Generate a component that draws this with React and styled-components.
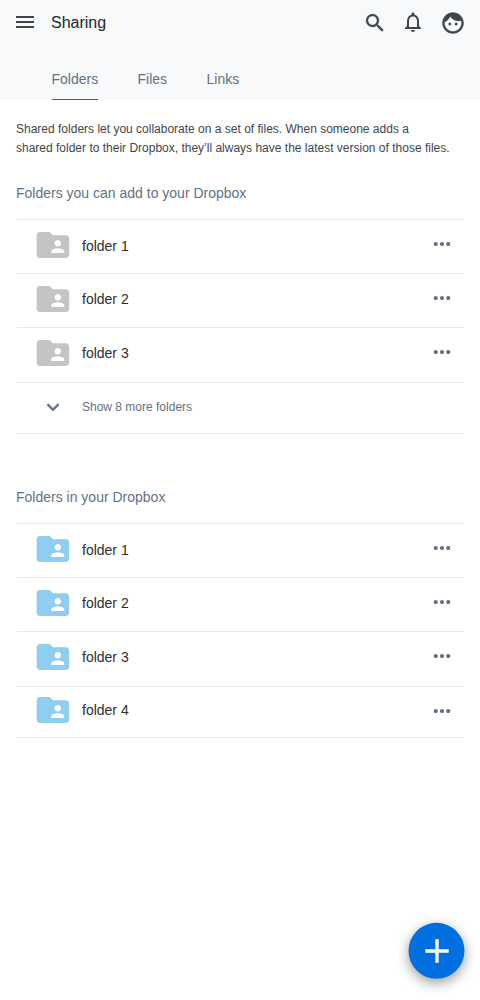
import React from 'react';
import styled, { createGlobalStyle } from 'styled-components';
import {
  MdMenu, MdNotificationsNone, MdFolderShared, MdMoreHoriz, MdAdd,
} from 'react-icons/md';

const GlobalStyle = createGlobalStyle`
  *, *::before, *::after { box-sizing: border-box; }
  body {
    margin: 0;
    background: #fff;
    font-family: "Liberation Sans", Arial, sans-serif;
  }
  svg { display: block; flex: none; }
  button {
    padding: 0;
    border: 0;
    background: none;
    color: inherit;
    font: inherit;
    cursor: pointer;
  }
`;

const Page = styled.div`
  position: relative;
  width: 100%;
  height: 1000px;
  background: #fff;
`;

const Header = styled.header`
  height: 100px;
  background: #f7f9fb;
  color: #3d464d;
`;

const TopBar = styled.div`
  display: flex;
  align-items: flex-start;
  height: 60px;
  padding: 10px 14px 0 13px;
`;

const Title = styled.h1`
  flex: 1;
  margin: 4px 0 0 14px;
  font-size: 16px;
  line-height: 18px;
  font-weight: 400;
  color: #1b2733;
`;

const Actions = styled.div`
  display: flex;
  align-items: flex-start;
`;

const IconButton = styled.button`
  && {
    margin: ${(p) => p.$drop || 0}px ${(p) => p.$after || 0}px 0 0;
  }
`;

const Tabs = styled.nav`
  display: flex;
  gap: 40px;
  height: 40px;
  padding-left: 52px;
`;

const Tab = styled.button`
  && {
    display: flex;
    align-items: flex-start;
    height: 40px;
    width: ${(p) => p.$width}px;
    padding-top: 11px;
    border-bottom: ${(p) => (p.$active ? '1px solid #0070e0' : '0')};
    color: #637282;
    font-size: 14px;
    line-height: 16px;
    text-indent: -0.5px;
    white-space: nowrap;
  }
`;

const Content = styled.main`
  padding: 20px 16px 0;
`;

const Intro = styled.p`
  margin: 0;
  font-size: 12px;
  line-height: 19px;
  color: #3d464d;
  white-space: nowrap;
`;

const Section = styled.section`
  margin-top: ${(p) => p.$gap}px;
`;

const SectionTitle = styled.h2`
  margin: 0 0 18px;
  font-size: 14px;
  line-height: 16px;
  font-weight: 400;
  color: #637282;
`;

const List = styled.ul`
  margin: 0 0 0 1px;
  padding: 0;
  list-style: none;
  border-bottom: 1px solid #e6e8eb;
`;

const Row = styled.li`
  display: flex;
  align-items: flex-start;
  height: ${(p) => p.$height}px;
  border-top: 1px solid #e6e8eb;
`;

const FolderIcon = styled.span`
  flex: none;
  width: 56px;
  padding: ${(p) => p.$top}px 0 0 17px;
  color: ${(p) => p.$color};
`;

const Name = styled.span`
  flex: 1;
  margin-left: 9px;
  padding-top: ${(p) => p.$top}px;
  font-size: 14px;
  line-height: 16px;
  color: #2e2e2e;
`;

const More = styled.button`
  && {
    padding: 11px 9px 0 0;
    color: #637282;
  }
`;

const ShowMore = styled.button`
  && {
    display: flex;
    align-items: flex-start;
    padding: 11px 0 0 23px;
    color: #637282;
    font-size: 12px;
    line-height: 26px;
  }
`;

const ShowMoreLabel = styled.span`
  margin-left: 16px;
`;

const Glyph = styled.svg`
  width: ${(p) => p.$size}px;
  height: ${(p) => p.$size}px;
  fill: currentColor;
  stroke: currentColor;
  stroke-width: 0.3px;
`;

const AddButton = styled.button`
  && {
    position: absolute;
    right: 15px;
    bottom: 21px;
    display: flex;
    align-items: center;
    justify-content: center;
    width: 56px;
    height: 56px;
    border-radius: 50%;
    background: #0070e0;
    color: #fff;
    box-shadow: 0 4px 13px rgba(0, 0, 0, 0.4);
    transform: translate(-0.5px, -0.2px);
  }
`;

function SearchIcon() {
  return (
    <Glyph $size={24} viewBox="0 0 24 24">
      <path d="M15.5 14h-.79l-.28-.27A6.471 6.471 0 0 0 16 9.5 6.5 6.5 0 1 0 9.5 16c1.61 0 3.09-.59 4.23-1.57l.27.28v.79l5 4.99L20.49 19l-4.99-5zm-6 0C7.01 14 5 11.99 5 9.5S7.01 5 9.5 5 14 7.01 14 9.5 11.99 14 9.5 14z" />
    </Glyph>
  );
}

function FaceIcon() {
  return (
    <Glyph $size={26} viewBox="-0.3 -0.3 24.6 24.6">
      <circle cx="9" cy="13" r="1.2" />
      <circle cx="15" cy="13" r="1.2" />
      <path d="M12 2C6.48 2 2 6.48 2 12s4.48 10 10 10 10-4.48 10-10S17.52 2 12 2zm0 18c-4.41 0-8-3.59-8-8 0-.29.02-.58.05-.86 2.36-1.05 4.23-2.98 5.21-5.37C11.07 8.33 14.05 10 17.42 10c.78 0 1.53-.09 2.25-.26.21.71.33 1.47.33 2.26 0 4.41-3.59 8-8 8z" />
    </Glyph>
  );
}

function ChevronIcon() {
  return (
    <Glyph $size={26} viewBox="-0.48 -0.48 24.96 24.96">
      <path d="M16.59 8.59L12 13.17 7.41 8.59 6 10l6 6 6-6z" />
    </Glyph>
  );
}

const available = [
  { name: 'folder 1', height: 54, icon: 5, text: 18 },
  { name: 'folder 2', height: 54, icon: 5, text: 17 },
  { name: 'folder 3', height: 55, icon: 5, text: 17 },
];

const owned = [
  ...available,
  { name: 'folder 4', height: 51, icon: 3, text: 15 },
];

function FolderRow({ folder, color }) {
  return (
    <Row $height={folder.height}>
      <FolderIcon $top={folder.icon} $color={color}>
        <MdFolderShared size={39} viewBox="0.36 -0.25 24 24" />
      </FolderIcon>
      <Name $top={folder.text}>{folder.name}</Name>
      <More aria-label="More options">
        <MdMoreHoriz size={26} viewBox="-0.48 -0.48 24.96 24.96" />
      </More>
    </Row>
  );
}

export default function App() {
  return (
    <Page>
      <GlobalStyle />
      <Header>
        <TopBar>
          <IconButton aria-label="Menu"><MdMenu size={24} /></IconButton>
          <Title>Sharing</Title>
          <Actions>
            <IconButton aria-label="Search" $drop={1} $after={14}><SearchIcon /></IconButton>
            <IconButton aria-label="Notifications" $after={15}><MdNotificationsNone size={24} /></IconButton>
            <IconButton aria-label="Account"><FaceIcon /></IconButton>
          </Actions>
        </TopBar>
        <Tabs>
          <Tab $active $width={46}>Folders</Tab>
          <Tab $width={29}>Files</Tab>
          <Tab $width={34}>Links</Tab>
        </Tabs>
      </Header>
      <Content>
        <Intro>
          Shared folders let you collaborate on a set of files. When someone adds a
          <br />
          shared folder to their Dropbox, they’ll always have the latest version of those files.
        </Intro>
        <Section $gap={27}>
          <SectionTitle>Folders you can add to your Dropbox</SectionTitle>
          <List>
            {available.map((f) => <FolderRow key={f.name} folder={f} color="#c4c4c4" />)}
            <Row $height={51}>
              <ShowMore>
                <ChevronIcon />
                <ShowMoreLabel>Show 8 more folders</ShowMoreLabel>
              </ShowMore>
            </Row>
          </List>
        </Section>
        <Section $gap={55}>
          <SectionTitle>Folders in your Dropbox</SectionTitle>
          <List>
            {owned.map((f) => <FolderRow key={f.name} folder={f} color="#8fcdf1" />)}
          </List>
        </Section>
      </Content>
      <AddButton aria-label="Add"><MdAdd size={40} viewBox="-0.3 -0.1 24 24" /></AddButton>
    </Page>
  );
}
